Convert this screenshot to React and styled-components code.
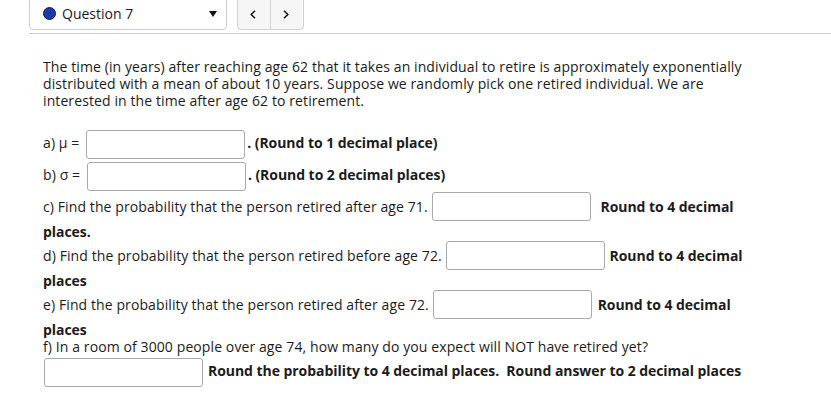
import styled, { createGlobalStyle } from "styled-components";

const GlobalStyle = createGlobalStyle`
  body {
    margin: 0;
    background: #fff;
    color: #1b1b1b;
    font-family: "Open Sans", Lato, sans-serif;
    font-size: 14px;
  }
`;

const Page = styled.div`
  padding-left: 29px;
  overflow: hidden;
  height: 409px;
`;

const TopBar = styled.div`
  display: flex;
  align-items: stretch;
  gap: 10px;
  height: 32px;
  margin-top: -2px;
`;

const Dropdown = styled.div`
  width: 198px;
  box-sizing: border-box;
  display: flex;
  align-items: center;
  padding: 0 9px 1px 13px;
  border: 1px solid #cfcfcf;
  border-radius: 0 0 4px 4px;
  font-size: 14px;
`;

const Dot = styled.span`
  width: 11px;
  height: 11px;
  border-radius: 50%;
  background: #1f3aa6;
  border: 1px solid #0c1a55;
  margin-right: 6px;
`;

const Label = styled.span`
  flex: 1;
`;

const Caret = styled.span`
  width: 0;
  height: 0;
  border-left: 4px solid transparent;
  border-right: 4px solid transparent;
  border-top: 6px solid #111;
  margin-top: 1px;
`;

const NavGroup = styled.div`
  display: flex;
  width: 67px;
  border: 1px solid #d2d2d2;
  border-radius: 0 0 4px 4px;
  background: #f6f6f6;
  box-sizing: border-box;
`;

const NavButton = styled.div`
  flex: 1;
  display: flex;
  align-items: center;
  justify-content: center;
  padding-right: 2px;
  border-left: ${(p) => (p.$divider ? "1px solid #d2d2d2" : "none")};
`;

const Rule = styled.div`
  height: 1px;
  background: #cccccc;
  margin-top: 3px;
`;

const Content = styled.div`
  width: 702px;
  padding-left: 14px;
  line-height: 17px;
  letter-spacing: 0.1px;
`;

const Intro = styled.p`
  margin: 24px 0 18px;
`;

const Line = styled.div`
  height: 32px;
  line-height: 32px;
`;

const WrapLine = styled.div`
  line-height: 17px;
`;

// empty inline-block: its baseline is the bottom margin edge
const Field = styled.span`
  display: inline-block;
  box-sizing: border-box;
  width: 159px;
  height: 29px;
  margin: ${(p) => (p.$inline ? "1px" : "0")} ${(p) => p.$right || 0}px
    ${(p) => (p.$inline ? "2px" : "0")} ${(p) => p.$left || 0}px;
  vertical-align: ${(p) => (p.$inline ? "-11px" : "middle")};
  border: 1px solid #a9a9a9;
  border-radius: 3px;
  background: #fff;
`;

const Bold = styled.b`
  font-weight: 700;
  letter-spacing: -0.05px;
`;

const Plain = styled.div`
  line-height: 17px;
`;

const Chevron = ({ dir }) => (
  <svg width="6" height="9" viewBox="0 0 6 9">
    <path
      d={dir === "left" ? "M5 0.8 L1.2 4.5 L5 8.2" : "M1 0.8 L4.8 4.5 L1 8.2"}
      fill="none"
      stroke="#111"
      strokeWidth="1.5"
    />
  </svg>
);

export default function App() {
  return (
    <Page>
      <GlobalStyle />
      <TopBar>
        <Dropdown>
          <Dot />
          <Label>Question 7</Label>
          <Caret />
        </Dropdown>
        <NavGroup>
          <NavButton>
            <Chevron dir="left" />
          </NavButton>
          <NavButton $divider>
            <Chevron dir="right" />
          </NavButton>
        </NavGroup>
      </TopBar>
      <Rule />
      <Content>
        <Intro>
          The time (in years) after reaching age 62 that it takes an individual
          to retire is approximately exponentially distributed with a mean of
          about 10 years. Suppose we randomly pick one retired individual. We
          are interested in the time after age 62 to retirement.
        </Intro>
        <Line>
          a) μ = <Field $left={3} $right={2} />
          <Bold>. (Round to 1 decimal place)</Bold>
        </Line>
        <Line>
          b) σ = <Field $left={3} $right={2} />
          <Bold>. (Round to 2 decimal places)</Bold>
        </Line>
        <WrapLine>
          c) Find the probability that the person retired after age 71.{" "}
          <Field $inline $right={10} />
          <Bold>Round to 4 decimal places.</Bold>
        </WrapLine>
        <WrapLine>
          d) Find the probability that the person retired before age 72.{" "}
          <Field $inline $right={5} />
          <Bold>Round to 4 decimal places</Bold>
        </WrapLine>
        <WrapLine>
          e) Find the probability that the person retired after age 72.{" "}
          <Field $inline $right={6} />
          <Bold>Round to 4 decimal places</Bold>
        </WrapLine>
        <Plain>
          f) In a room of 3000 people over age 74, how many do you expect will
          NOT have retired yet?
        </Plain>
        <Line>
          <Field $left={1} $right={5} />
          <Bold>
            Round the probability to 4 decimal places.&nbsp; Round answer to 2
            decimal places
          </Bold>
        </Line>
      </Content>
    </Page>
  );
}
